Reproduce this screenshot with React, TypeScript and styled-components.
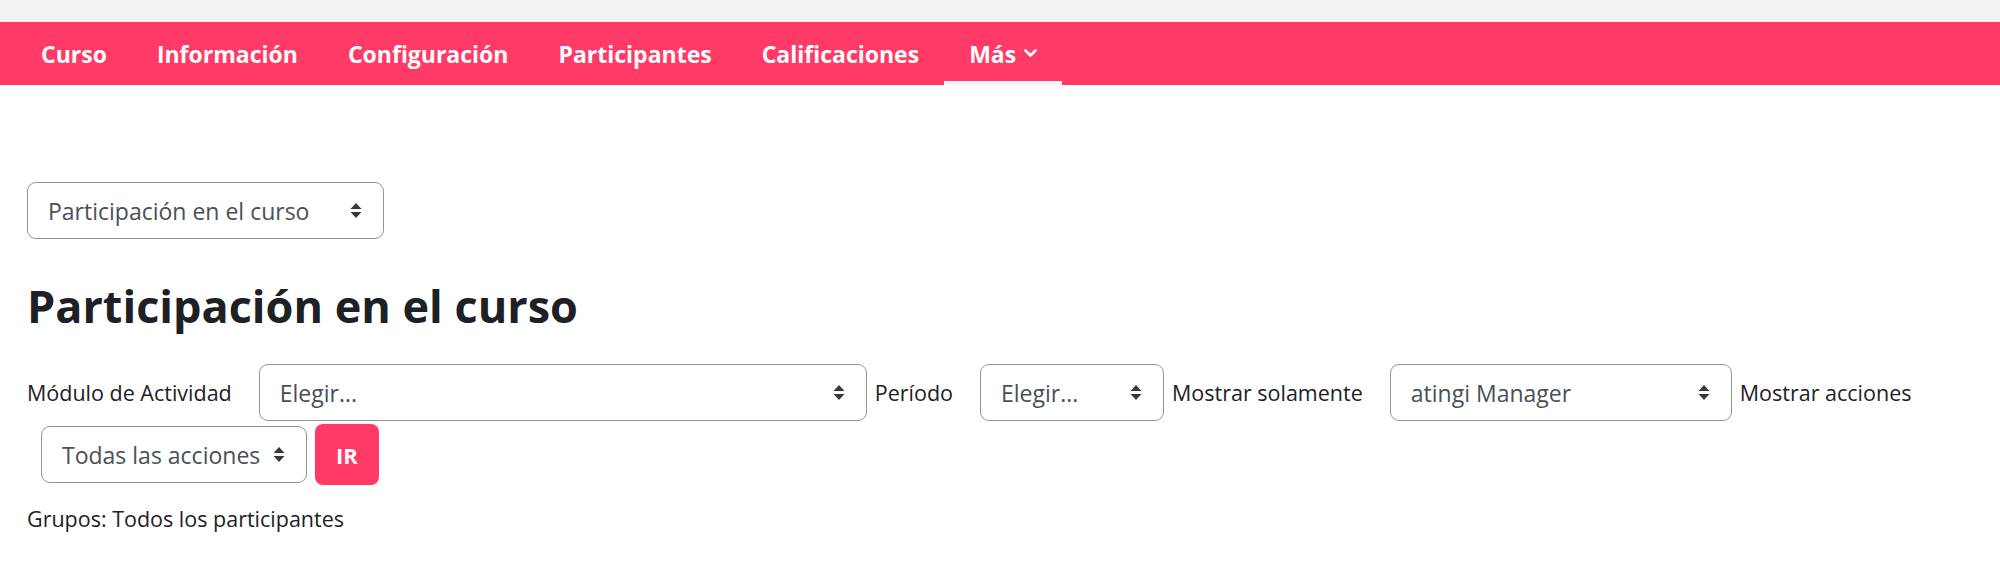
import styled, { createGlobalStyle } from "styled-components";

const GlobalStyle = createGlobalStyle`
  body {
    margin: 0;
    background: #ffffff;
    font-family: "Open Sans", "Noto Sans", sans-serif;
    color: #1d2125;
  }
`;

const TopStrip = styled.div`
  height: 22px;
  background: #f2f2f2;
`;

const NavBar = styled.nav`
  display: flex;
  height: 63px;
  padding-left: 16px;
  background: #ff3a66;
`;

const NavItem = styled.a<{ active?: boolean }>`
  display: flex;
  align-items: center;
  gap: 8px;
  padding: 0 25px;
  color: #ffffff;
  font-size: 23px;
  font-weight: 700;
  text-decoration: none;
  box-sizing: border-box;
  border-bottom: 4px solid ${({ active }) => (active ? "#f4f4f6" : "transparent")};
  border-top: 4px solid transparent;
`;

const Main = styled.main`
  padding: 97px 27px 0;
`;

const SelectBox = styled.div<{ width: number }>`
  display: flex;
  align-items: center;
  justify-content: space-between;
  box-sizing: border-box;
  width: ${({ width }) => width}px;
  height: 57px;
  padding: 0 21px 0 20px;
  border: 1.5px solid #8f959e;
  border-radius: 9px;
  background: #ffffff;
  color: #495057;
  font-size: 23px;
  flex-shrink: 0;
  white-space: nowrap;
`;

const Heading = styled.h2`
  margin: 40px 0 31px;
  font-size: 45px;
  font-weight: 700;
  line-height: 1.2;
  color: #1d2125;
`;

const FormRow = styled.form`
  display: flex;
  flex-wrap: wrap;
  align-items: center;
  row-gap: 3px;
`;

const Label = styled.label`
  margin-right: 13px;
  font-size: 21.5px;
  color: #1d2125;
`;

const FieldSelect = styled(SelectBox)`
  margin: 0 8px 0 14px;
`;

const GoButton = styled.button`
  height: 61px;
  padding: 0 21px;
  border: none;
  border-radius: 8px;
  background: #ff3a66;
  color: #ffffff;
  font-family: inherit;
  font-size: 22px;
  font-weight: 700;
`;

const Groups = styled.p`
  margin: 19px 0 0;
  font-size: 21.5px;
  color: #1d2125;
`;

const SortArrows = () => (
  <svg width="12" height="17" viewBox="0 0 12 17">
    <path d="M6 1 L11.5 7 H0.5 Z" fill="#343a40" />
    <path d="M6 16 L11.5 10 H0.5 Z" fill="#343a40" />
  </svg>
);

const Chevron = () => (
  <svg width="13" height="9" viewBox="0 0 13 9">
    <path d="M1.5 1.5 L6.5 6.5 L11.5 1.5" fill="none" stroke="#ffffff" strokeWidth="2.6" strokeLinecap="round" strokeLinejoin="round" />
  </svg>
);

const navItems = ["Curso", "Información", "Configuración", "Participantes", "Calificaciones"];

export default function App() {
  return (
    <>
      <GlobalStyle />
      <TopStrip />
      <NavBar>
        {navItems.map((item) => (
          <NavItem key={item}>{item}</NavItem>
        ))}
        <NavItem active>
          Más <Chevron />
        </NavItem>
      </NavBar>
      <Main>
        <SelectBox width={357}>
          Participación en el curso <SortArrows />
        </SelectBox>
        <Heading>Participación en el curso</Heading>
        <FormRow>
          <Label>Módulo de Actividad</Label>
          <FieldSelect width={608}>
            Elegir... <SortArrows />
          </FieldSelect>
          <Label>Período</Label>
          <FieldSelect width={184}>
            Elegir... <SortArrows />
          </FieldSelect>
          <Label>Mostrar solamente</Label>
          <FieldSelect width={342}>
            atingi Manager <SortArrows />
          </FieldSelect>
          <Label>Mostrar acciones</Label>
          <FieldSelect width={266}>
            Todas las acciones <SortArrows />
          </FieldSelect>
          <GoButton type="button">IR</GoButton>
        </FormRow>
        <Groups>Grupos: Todos los participantes</Groups>
      </Main>
    </>
  );
}
